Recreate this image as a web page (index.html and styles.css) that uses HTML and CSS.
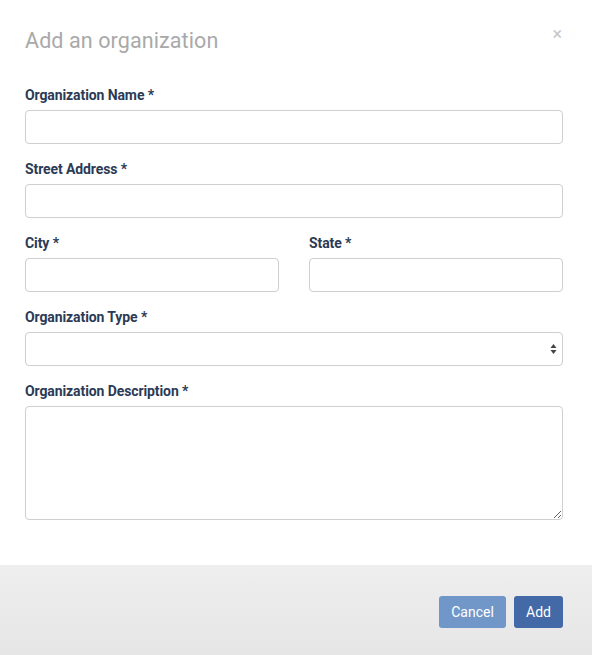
FILE: index.html
```html
<!DOCTYPE html>
<html>
<head>
<meta charset="utf-8">
<link rel="stylesheet" href="styles.css">
</head>
<body>
<div class="modal">
  <div class="modal-body">
    <div class="header">
      <h2 class="title">Add an organization</h2>
      <span class="close">×</span>
    </div>
    <div class="field">
      <label class="label">Organization Name *</label>
      <input class="input" type="text">
    </div>
    <div class="field">
      <label class="label">Street Address *</label>
      <input class="input" type="text">
    </div>
    <div class="row">
      <div class="field">
        <label class="label">City *</label>
        <input class="input" type="text">
      </div>
      <div class="field">
        <label class="label">State *</label>
        <input class="input" type="text">
      </div>
    </div>
    <div class="field">
      <label class="label">Organization Type *</label>
      <div class="select">
        <svg class="arrows" width="7" height="12" viewBox="0 0 7 12"><path d="M3.5 1 L6.5 5 L0.5 5 Z M3.5 11 L0.5 7 L6.5 7 Z" fill="#444"/></svg>
      </div>
    </div>
    <div class="field">
      <label class="label">Organization Description *</label>
      <textarea class="textarea"></textarea>
    </div>
  </div>
  <div class="footer">
    <button class="btn btn-cancel">Cancel</button>
    <button class="btn btn-add">Add</button>
  </div>
</div>
</body>
</html>
```
FILE: styles.css
```css
* { box-sizing: border-box; }
html, body { margin: 0; padding: 0; background: #fff; }
body { font-family: Roboto, "Open Sans", sans-serif; }
.modal { width: 592px; height: 655px; display: flex; flex-direction: column; }
.modal-body { padding: 0 29px 0 25px; flex: 0 0 565px; }
.header { position: relative; padding-top: 28px; height: 85px; }
.title { margin: 0; font-size: 21.5px; font-weight: 400; color: #a9a9a9; line-height: 26px; letter-spacing: 0.1px; }
.close { position: absolute; right: 1px; top: 24px; font-size: 18px; color: #c9c9c9; line-height: 20px; }
.field { display: flex; flex-direction: column; margin-bottom: 15px; }
.label { font-size: 14px; font-weight: 700; color: #2c3a55; line-height: 18px; padding-top: 1px; margin-bottom: 6px; letter-spacing: -0.1px; }
.input, .select { height: 34px; border: 1px solid #cfcfcf; border-radius: 4px; background: #fff; width: 100%; margin: 0; padding: 0; }
.select { position: relative; }
.arrows { position: absolute; right: 5px; top: 10px; }
.row { display: grid; grid-template-columns: 254px 254px; column-gap: 30px; }
.textarea { height: 114px; border: 1px solid #cfcfcf; border-radius: 4px; width: 100%; margin: 0; resize: both; padding: 0; }
.footer { flex: 1; background: linear-gradient(#eeeeee, #e6e6e6); display: flex; justify-content: flex-end; align-items: flex-start; padding: 31px 29px 0 0; gap: 8px; }
.btn { height: 32px; border: none; border-radius: 3px; color: #fff; font-family: Roboto, sans-serif; font-size: 14px; padding: 0 12px; }
.btn-cancel { background: #7197c9; width: 67px; }
.btn-add { background: #4369a7; width: 49px; }
```
